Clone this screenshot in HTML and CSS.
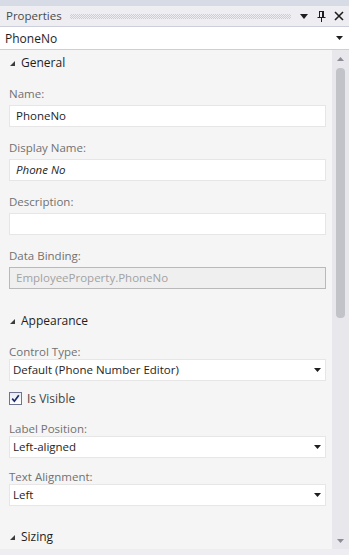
FILE: index.html
```html
<!DOCTYPE html>
<html>
<head>
<meta charset="utf-8">
<title>Properties</title>
<link rel="stylesheet" href="styles.css">
</head>
<body>
<div class="window">
  <div class="top-strip"></div>
  <div class="titlebar">
    <span class="title">Properties</span>
    <span class="grip"></span>
    <span class="tb-icons">
      <svg class="tb-menu" width="8" height="5" viewBox="0 0 8 5"><polygon points="0,0 8,0 4,5" fill="#1e1e1e"/></svg>
      <svg class="tb-pin" width="9" height="11" viewBox="0 0 9 11"><path d="M2 0.5h5M2.5 0.5v5.5M5.5 0.5v5.5M6.5 0.5v5.5M0.5 6.5h8M4.5 6.5v4.5" stroke="#1e1e1e" stroke-width="1" fill="none"/></svg>
      <svg class="tb-close" width="10" height="10" viewBox="0 0 10 10"><path d="M1 1L9 9M9 1L1 9" stroke="#1e1e1e" stroke-width="1.6" fill="none"/></svg>
    </span>
  </div>
  <div class="selector">
    <span class="selector-text">PhoneNo</span>
    <svg class="arrow" width="7" height="4" viewBox="0 0 7 4"><polygon points="0,0 7,0 3.5,4" fill="#1e1e1e"/></svg>
  </div>
  <div class="main">
    <div class="content">
      <div class="section-header first">
        <svg class="expander" width="5" height="5" viewBox="0 0 5 5"><polygon points="5,0 5,5 0,5" fill="#3c3c3c"/></svg>
        <span>General</span>
      </div>
      <div class="field text-field after-header">
        <div class="label">Name:</div>
        <div class="box">PhoneNo</div>
      </div>
      <div class="field text-field">
        <div class="label">Display Name:</div>
        <div class="box italic">Phone No</div>
      </div>
      <div class="field text-field">
        <div class="label">Description:</div>
        <div class="box"></div>
      </div>
      <div class="field text-field">
        <div class="label">Data Binding:</div>
        <div class="box disabled">EmployeeProperty.PhoneNo</div>
      </div>

      <div class="section-header">
        <svg class="expander" width="5" height="5" viewBox="0 0 5 5"><polygon points="5,0 5,5 0,5" fill="#3c3c3c"/></svg>
        <span>Appearance</span>
      </div>
      <div class="field combo-field after-header">
        <div class="label">Control Type:</div>
        <div class="box combo">
          <span>Default (Phone Number Editor)</span>
          <svg class="arrow" width="7" height="4" viewBox="0 0 7 4"><polygon points="0,0 7,0 3.5,4" fill="#1e1e1e"/></svg>
        </div>
      </div>
      <div class="check-row">
        <span class="checkbox">
          <svg width="9" height="9" viewBox="0 0 9 9"><path d="M1.2 4.6L3.4 7.2L7.8 1.2" stroke="#1b2a6b" stroke-width="1.7" fill="none"/></svg>
        </span>
        <span class="check-label">Is Visible</span>
      </div>
      <div class="field combo-field">
        <div class="label">Label Position:</div>
        <div class="box combo">
          <span>Left-aligned</span>
          <svg class="arrow" width="7" height="4" viewBox="0 0 7 4"><polygon points="0,0 7,0 3.5,4" fill="#1e1e1e"/></svg>
        </div>
      </div>
      <div class="field combo-field">
        <div class="label">Text Alignment:</div>
        <div class="box combo">
          <span>Left</span>
          <svg class="arrow" width="7" height="4" viewBox="0 0 7 4"><polygon points="0,0 7,0 3.5,4" fill="#1e1e1e"/></svg>
        </div>
      </div>

      <div class="section-header sizing">
        <svg class="expander" width="5" height="5" viewBox="0 0 5 5"><polygon points="5,0 5,5 0,5" fill="#3c3c3c"/></svg>
        <span>Sizing</span>
      </div>
    </div>
    <div class="scrollbar">
      <div class="sb-button">
        <svg width="7" height="4" viewBox="0 0 7 4"><polygon points="0,4 7,4 3.5,0" fill="#8a8c98"/></svg>
      </div>
      <div class="thumb"></div>
      <div class="sb-spacer"></div>
      <div class="sb-button">
        <svg width="7" height="4" viewBox="0 0 7 4"><polygon points="0,0 7,0 3.5,4" fill="#8a8c98"/></svg>
      </div>
    </div>
  </div>
  <div class="bottom-strip"></div>
</div>
</body>
</html>
```

FILE: styles.css
```css
html, body {
  margin: 0;
  padding: 0;
}

body {
  background: #eeeef2;
  font-family: "Open Sans", "Noto Sans", sans-serif;
  font-size: 11.5px;
  color: #1e1e1e;
}

.window {
  width: 349px;
  height: 555px;
  display: flex;
  flex-direction: column;
  overflow: hidden;
}

.top-strip {
  height: 6px;
  background: #d6dbe6;
  flex: none;
}

.titlebar {
  height: 20px;
  flex: none;
  display: flex;
  align-items: center;
  background: #eeeef2;
  padding-left: 6px;
  box-sizing: border-box;
}

.title {
  color: #4a4a4a;
  font-size: 11.5px;
  line-height: 20px;
}

.grip {
  flex: 1;
  height: 5px;
  margin: 1px 9px 0 8px;
  background-image: repeating-conic-gradient(#cdcdd3 0 25%, transparent 0 50%);
  background-size: 2px 2px;
}

.tb-icons {
  display: flex;
  align-items: center;
  gap: 0;
  padding-right: 5px;
}

.tb-menu {
  margin-right: 9px;
}

.tb-pin {
  margin-right: 8px;
}

.selector {
  height: 24px;
  flex: none;
  box-sizing: border-box;
  background: #ffffff;
  border-top: 1px solid #cccedb;
  border-bottom: 1px solid #cccedb;
  display: flex;
  align-items: center;
  justify-content: space-between;
  padding: 0 6px 0 5px;
  font-size: 12px;
}

.main {
  flex: none;
  height: 499px;
  display: flex;
}

.content {
  flex: 1;
  background: #f5f5f5;
  display: flex;
  flex-direction: column;
  padding: 5px 6px 0 9px;
  overflow: hidden;
}

.section-header {
  display: flex;
  align-items: center;
  height: 16px;
  line-height: 16px;
  font-size: 12px;
  color: #1e1e1e;
  margin-top: 24px;
  flex: none;
}

.section-header.first {
  margin-top: 0;
}

.section-header.sizing {
  margin-top: 23px;
}

.expander {
  margin: 0 6px 0 1px;
}

.field {
  display: flex;
  flex-direction: column;
  flex: none;
}

.label {
  color: #717171;
  font-size: 11.5px;
}

.text-field {
  margin-top: 13px;
}

.text-field .label {
  height: 16px;
  line-height: 16px;
  margin-bottom: 3px;
}

.text-field.after-header {
  margin-top: 15px;
}

.combo-field {
  margin-top: 11px;
}

.combo-field.after-header {
  margin-top: 15px;
}

.combo-field .label {
  height: 15px;
  line-height: 15px;
}

.box {
  height: 22px;
  box-sizing: border-box;
  background: #ffffff;
  border: 1px solid #e6e6e6;
  padding: 0 6px;
  line-height: 20px;
  font-size: 11.5px;
  color: #1e1e1e;
  white-space: nowrap;
  overflow: hidden;
}

.box.italic {
  font-style: italic;
}

.box.disabled {
  background: #efefef;
  border-color: #b9b9b9;
  color: #a2a2a2;
}

.box.combo {
  display: flex;
  align-items: center;
  justify-content: space-between;
  padding: 0 4px 0 3px;
}

.check-row {
  display: flex;
  align-items: center;
  height: 13px;
  margin-top: 11px;
  margin-bottom: 5px;
  flex: none;
}

.checkbox {
  width: 13px;
  height: 13px;
  box-sizing: border-box;
  border: 1px solid #6f7392;
  background: linear-gradient(#e9ebf3, #ffffff);
  display: flex;
  align-items: center;
  justify-content: center;
}

.check-label {
  margin-left: 5px;
  font-size: 12px;
  color: #444444;
}

.scrollbar {
  width: 17px;
  flex: none;
  background: #e8e8ec;
  display: flex;
  flex-direction: column;
  align-items: center;
}

.sb-button {
  height: 17px;
  width: 17px;
  display: flex;
  align-items: center;
  justify-content: center;
  flex: none;
}

.thumb {
  width: 9px;
  height: 250px;
  margin-top: 1px;
  border-radius: 4px;
  background: #c2c3c9;
  flex: none;
}

.sb-spacer {
  flex: 1;
}

.bottom-strip {
  flex: 1;
  background: #eeeef2;
}
```
